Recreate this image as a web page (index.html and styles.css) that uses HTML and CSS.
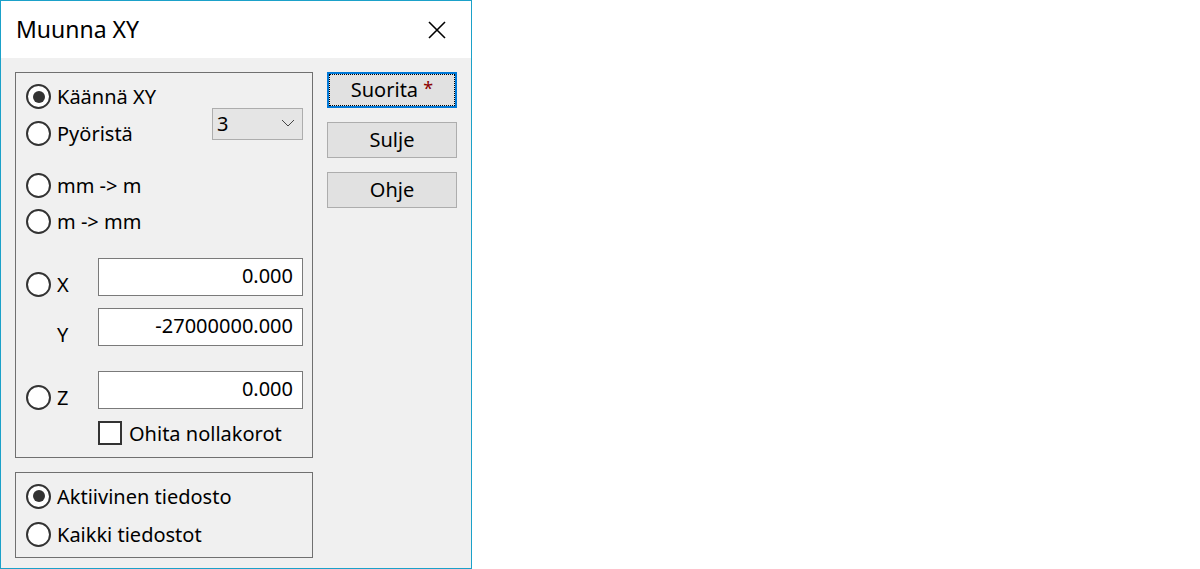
FILE: index.html
```html
<!DOCTYPE html>
<html lang="fi">
<head>
  <meta charset="UTF-8">
  <title>Muunna XY</title>
  <link rel="stylesheet" href="styles.css">
</head>
<body>
  <div class="window">
    <div class="titlebar">
      <span class="title">Muunna XY</span>
      <span class="close">
        <svg width="18" height="18" viewBox="0 0 18 18"><path d="M1 1 L17 17 M17 1 L1 17" stroke="#000" stroke-width="1.6" fill="none"/></svg>
      </span>
    </div>
    <div class="client">
      <div class="left">
        <div class="group main">
          <div class="top">
            <div class="col">
              <div class="radio checked"><span class="dot"></span>Käännä XY</div>
              <div class="radio"><span class="dot"></span>Pyöristä</div>
            </div>
            <div class="combo">
              <span>3</span>
              <svg width="14" height="8" viewBox="0 0 14 8"><path d="M1 1 L7 7 L13 1" stroke="#444" stroke-width="1" fill="none"/></svg>
            </div>
          </div>
          <div class="pair">
            <div class="radio"><span class="dot"></span>mm -&gt; m</div>
            <div class="radio"><span class="dot"></span>m -&gt; mm</div>
          </div>
          <div class="coord first">
            <div class="radio tag"><span class="dot"></span>X</div>
            <div class="field">0.000</div>
          </div>
          <div class="coord">
            <div class="tag plain">Y</div>
            <div class="field">-27000000.000</div>
          </div>
          <div class="coord last">
            <div class="radio tag"><span class="dot"></span>Z</div>
            <div class="field">0.000</div>
          </div>
          <div class="check"><span class="box"></span>Ohita nollakorot</div>
        </div>
        <div class="group files">
          <div class="radio checked"><span class="dot"></span>Aktiivinen tiedosto</div>
          <div class="radio"><span class="dot"></span>Kaikki tiedostot</div>
        </div>
      </div>
      <div class="buttons">
        <button class="btn default">Suorita <span class="star">*</span></button>
        <button class="btn">Sulje</button>
        <button class="btn">Ohje</button>
      </div>
    </div>
  </div>
</body>
</html>
```

FILE: styles.css
```css
/* Muunna XY -dialogi */
body {
  margin: 0;
  padding: 0;
  background: #fff;
  font-family: "Noto Sans", "Open Sans", sans-serif;
  font-size: 20px;
  color: #000;
}
.window {
  box-sizing: border-box;
  width: 472px;
  height: 569px;
  border: 1px solid #1ba1c9;
  background: #f0f0f0;
  display: flex;
  flex-direction: column;
}
.titlebar {
  height: 57px;
  background: #fff;
  display: flex;
  align-items: center;
  justify-content: space-between;
  padding: 0 25px 0 15px;
}
.title {
  font-size: 23px;
  padding-bottom: 2px;
}
.close {
  display: flex;
}
.client {
  display: flex;
  gap: 14px;
  padding: 14px 14px 10px 14px;
}
.left {
  width: 298px;
  display: flex;
  flex-direction: column;
  gap: 14px;
}
.group {
  box-sizing: border-box;
  border: 1px solid #707070;
}
.main {
  height: 386px;
  padding: 5px 9px 0 10px;
}
.files {
  height: 86px;
  padding: 4px 9px 0 10px;
}
.radio {
  display: flex;
  align-items: center;
  height: 37px;
  white-space: nowrap;
}
.files .radio {
  height: 38px;
}
.dot {
  box-sizing: border-box;
  width: 25px;
  height: 25px;
  border: 2px solid #333;
  border-radius: 50%;
  background: #fff;
  margin-right: 6px;
  display: flex;
  align-items: center;
  justify-content: center;
  flex: none;
}
.checked .dot::after {
  content: "";
  width: 12px;
  height: 12px;
  border-radius: 50%;
  background: #333;
}
.top {
  display: flex;
  justify-content: space-between;
}
.combo {
  box-sizing: border-box;
  width: 91px;
  height: 32px;
  margin-top: 30px;
  border: 1px solid #adadad;
  background: #e5e5e5;
  display: flex;
  align-items: center;
  justify-content: space-between;
  padding: 0 7px 2px 4px;
}
.pair {
  margin-top: 15px;
}
.pair .radio {
  height: 36px;
}
.coord {
  display: flex;
  align-items: center;
  height: 38px;
  margin-top: 12px;
}
.coord.first {
  margin-top: 19px;
}
.coord.last {
  margin-top: 25px;
}
.tag {
  width: 72px;
  margin-top: 14px;
  height: 30px;
}
.plain {
  padding-left: 31px;
  box-sizing: border-box;
  display: flex;
  align-items: center;
}
.field {
  box-sizing: border-box;
  width: 205px;
  height: 38px;
  border: 1px solid #7a7a7a;
  background: #fff;
  text-align: right;
  padding: 3px 9px 0 0;
}
.check {
  display: flex;
  align-items: center;
  height: 24px;
  margin: 12px 0 0 72px;
  white-space: nowrap;
}
.box {
  box-sizing: border-box;
  width: 24px;
  height: 24px;
  border: 2px solid #333;
  background: #fff;
  margin-right: 7px;
}
.buttons {
  display: flex;
  flex-direction: column;
  gap: 14px;
}
.btn {
  box-sizing: border-box;
  width: 130px;
  height: 36px;
  border: 1px solid #adadad;
  background: #e1e1e1;
  font-family: inherit;
  font-size: 20px;
  color: #000;
  padding: 0 0 2px 0;
}
.btn.default {
  border: 2px solid #0078d7;
  outline: 1px dotted #000;
  outline-offset: -3px;
}
.star {
  color: #8b0000;
  font-size: 18px;
  vertical-align: 2px;
}
```
